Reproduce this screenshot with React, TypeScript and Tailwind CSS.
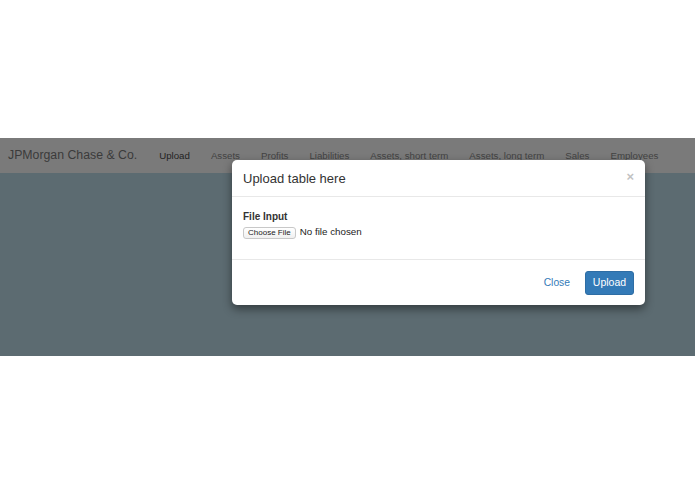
import React from 'react';

const navItems = ['Upload', 'Assets', 'Profits', 'Liabilities', 'Assets, short term', 'Assets, long term', 'Sales', 'Employees'];

export default function App() {
  return (
    <div className="relative w-[695px] h-[494px] bg-white overflow-hidden" style={{ fontFamily: '"Liberation Sans", Arial, sans-serif' }}>
      <div className="h-[138px]" />
      {/* navbar under backdrop */}
      <div className="h-[35px] bg-[#7a7a7a] flex items-center pl-[8px]">
        <span className="text-[12.3px] text-[#3b3b3b] mr-[22px]">JPMorgan Chase &amp; Co.</span>
        <div className="flex gap-[21px] text-[9.7px] pt-[1px]">
          {navItems.map((item, i) => (
            <span key={item} className={i === 0 ? 'text-[#222]' : 'text-[#424242]'}>{item}</span>
          ))}
        </div>
      </div>
      <div className="h-[183px] bg-[#5c6b71]" />

      {/* modal */}
      <div className="absolute left-[232px] top-[160px] w-[413px] h-[145px] bg-white rounded-[5px] shadow-[0_4px_10px_rgba(0,0,0,0.45)] flex flex-col">
        <div className="h-[37px] border-b border-[#e8e8e8] flex items-center justify-between pl-[11px] pr-[11px]">
          <span className="text-[13px] text-[#333] mt-[2px]">Upload table here</span>
          <span className="text-[13px] text-[#c2c2c2] font-bold leading-none -mt-[4px]">×</span>
        </div>
        <div className="h-[63px] border-b border-[#e8e8e8] px-[11px] pt-[12px]">
          <div className="text-[10px] font-bold text-[#333]">File Input</div>
          <div className="flex items-center mt-[3px]">
            <span className="h-[12px] px-[4px] border border-[#c8c8c8] rounded-[3px] bg-gradient-to-b from-white to-[#f0f0f0] text-[8px] leading-[10px] text-[#222] flex items-center">Choose File</span>
            <span className="ml-[4px] text-[9.8px] text-[#222] -mt-[2px]">No file chosen</span>
          </div>
        </div>
        <div className="flex-1 flex items-center justify-end pr-[11px] gap-[15px] pt-[1px]">
          <span className="text-[10.3px] text-[#337ab7]">Close</span>
          <span className="w-[49px] h-[24px] bg-[#337ab7] rounded-[3px] text-white text-[10.5px] flex items-center justify-center border border-[#2e6da4]">Upload</span>
        </div>
      </div>
    </div>
  );
}
